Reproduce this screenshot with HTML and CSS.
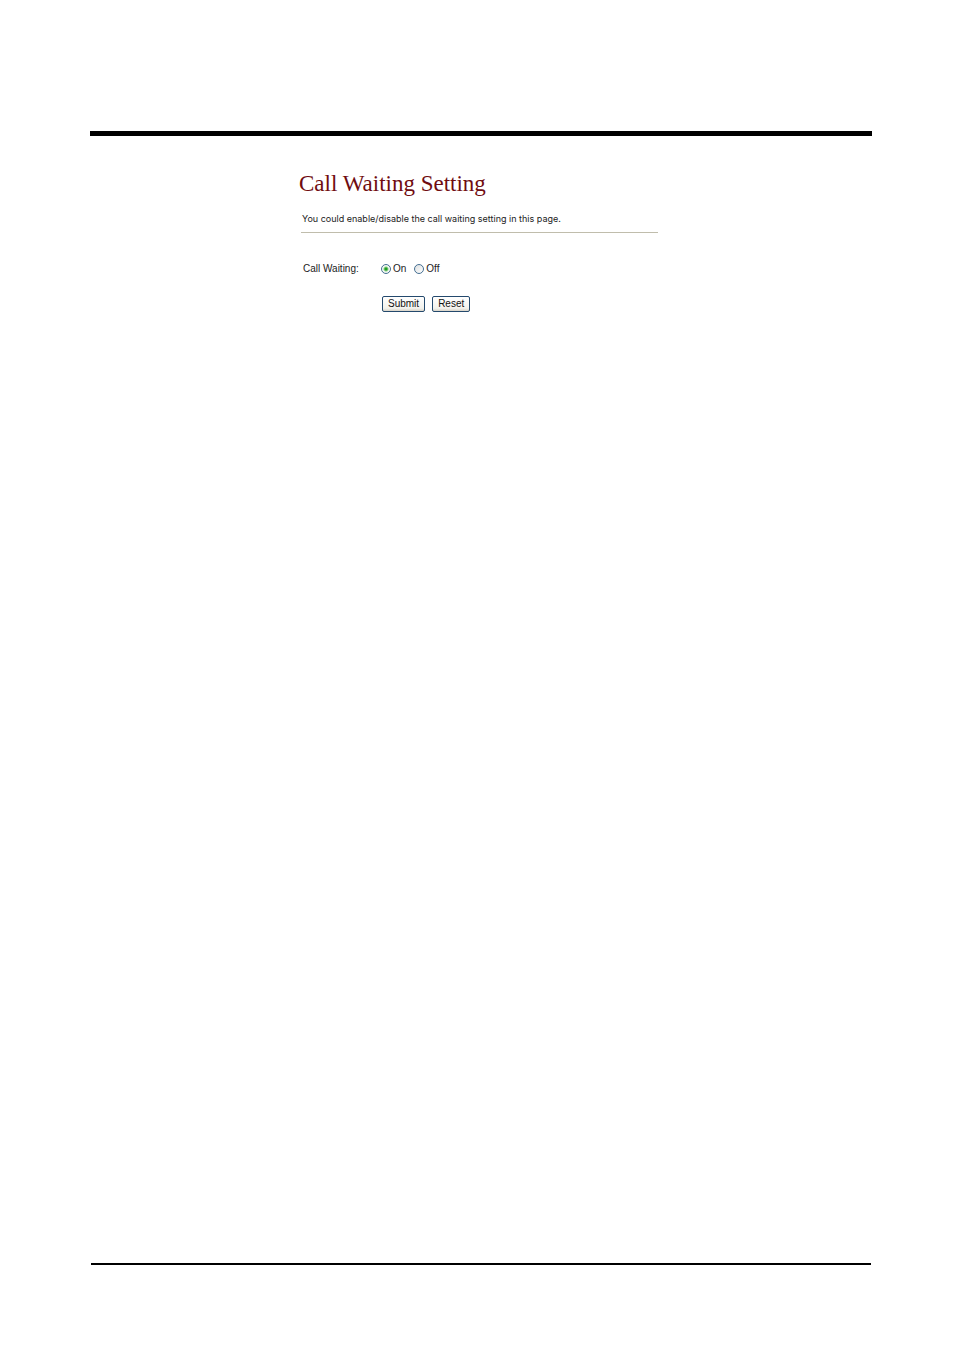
FILE: index.html
```html
<!DOCTYPE html>
<html lang="en">
<head>
    <meta charset="UTF-8">
    <meta name="viewport" content="width=device-width, initial-scale=1.0">
    <title>Call Waiting Setting</title>
    <link rel="stylesheet" href="styles.css">
</head>
<body>
    <main class="content">
        <h1>Call Waiting Setting</h1>
        <p class="intro">You could enable/disable the call waiting setting in this page.</p>
        <form class="settings">
            <div class="row" role="radiogroup" aria-labelledby="waitingLabel">
                <span class="row-label" id="waitingLabel">Call Waiting:</span>
                <label class="option"><input type="radio" name="waiting" value="on" checked>On</label>
                <label class="option"><input type="radio" name="waiting" value="off">Off</label>
            </div>
            <div class="button-row">
                <button type="submit">Submit</button>
                <button type="reset">Reset</button>
            </div>
        </form>
    </main>
    <footer class="footer"></footer>
</body>
</html>
```

FILE: styles.css
```css
* {
    box-sizing: border-box;
}
body {
    display: flex;
    flex-direction: column;
    min-height: 100vh;
    margin: 0;
    padding: 131px 82px 85px 90px;
    background-color: #fff;
    color: #222;
    font-family: "Liberation Sans", Arial, sans-serif;
    font-size: 10px;
    line-height: 12px;
}
.content {
    flex: 1;
    border-top: 5px solid #000;
    padding: 34px 214px 0 209px;
}
h1 {
    margin: 0;
    color: #700c10;
    font-family: "Liberation Serif", "Times New Roman", serif;
    font-size: 23px;
    font-weight: normal;
    line-height: 28px;
    white-space: nowrap;
}
.intro {
    margin: 15px 0 0 2px;
    padding: 0 0 7px 1px;
    border-bottom: 1px solid #c0bdac;
    font-family: Inter, Arial, sans-serif;
    font-size: 9px;
}
.settings {
    padding: 30px 0 0 4px;
}
.row {
    display: flex;
    align-items: center;
}
.row-label {
    width: 78px;
}
.option {
    display: flex;
    align-items: center;
    gap: 2px;
    margin-right: 8px;
}
input[type="radio"] {
    appearance: none;
    width: 10px;
    height: 10px;
    margin: 0;
    border: 1px solid #456f92;
    border-radius: 50%;
    background: linear-gradient(135deg, #dcdfe0, #fff);
}
input[type="radio"]:checked {
    background: radial-gradient(circle, #21a121 0 1px, #f4f8f2 3px);
}
.button-row {
    display: flex;
    gap: 7px;
    padding: 21px 0 0 79px;
}
button {
    height: 16px;
    padding: 0 5px;
    border: 1px solid #24496d;
    border-radius: 2px;
    background: linear-gradient(#fff, #f3f2ec 80%, #d8d3c8);
    color: #111;
    font-family: inherit;
    font-size: 10px;
    line-height: 12px;
}
.footer {
    margin: 0 1px;
    border-top: 2px solid #000;
}
```
